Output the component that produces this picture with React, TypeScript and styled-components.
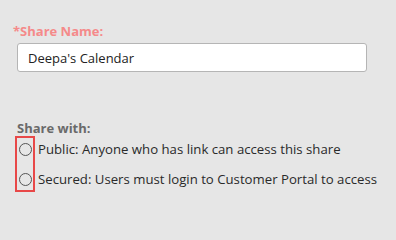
import styled, { createGlobalStyle } from 'styled-components'

const GlobalStyle = createGlobalStyle`
    html, body {
        margin: 0;
        padding: 0;
        background: #e6e6e6;
    }
    body {
        font-family: 'Open Sans', 'Noto Sans', sans-serif;
        color: #333;
    }
`

const options = [
    { id: 'public', label: 'Public: Anyone who has link can access this share' },
    { id: 'secured', label: 'Secured: Users must login to Customer Portal to access' },
]

export default function App() {
    return (
        <StyledShare className="share">
            <GlobalStyle />
            <section className="share__name">
                <span className="share__name--label">*Share Name:</span>
                <input className="share__name--input" type="text" defaultValue="Deepa's Calendar" />
            </section>
            <section className="share__with">
                <span className="share__with--title">Share with:</span>
                <div className="share__with--options">
                    <div className="share__with--radios">
                        {options.map((option) => (
                            <Radio key={option.id} />
                        ))}
                    </div>
                    <div className="share__with--labels">
                        {options.map((option) => (
                            <span key={option.id} className="share__with--label">
                                {option.label}
                            </span>
                        ))}
                    </div>
                </div>
            </section>
        </StyledShare>
    )
}

const Radio = styled.span`
    display: block;
    width: 11px;
    height: 11px;
    border: 1px solid #555;
    border-radius: 50%;
    background: transparent;
`

const StyledShare = styled.main`
    width: 396px;
    height: 240px;
    box-sizing: border-box;
    padding: 23px 0 0 17px;

    .share {
        &__name {
            display: flex;
            flex-direction: column;
            &--label {
                margin-left: -4px;
                font-size: 13px;
                font-weight: 700;
                line-height: 16px;
                color: #f58a8a;
            }
            &--input {
                box-sizing: border-box;
                margin-top: 4px;
                width: 350px;
                height: 29px;
                padding: 0 10px;
                border: 1px solid #b5b5b5;
                border-radius: 3px;
                background: #fff;
                font-family: inherit;
                font-size: 13px;
                color: #222;
                outline: none;
            }
        }

        &__with {
            margin-top: 48px;
            display: flex;
            flex-direction: column;
            &--title {
                font-size: 13px;
                font-weight: 700;
                line-height: 16px;
                color: #6a6a6a;
            }
            &--options {
                display: flex;
                align-items: flex-start;
                margin-top: 0;
                margin-left: -2px;
            }
            &--radios {
                box-sizing: border-box;
                width: 20px;
                height: 56px;
                border: 2px solid #e84848;
                display: flex;
                flex-direction: column;
                align-items: center;
                gap: 17px;
                padding-top: 5px;
            }
            &--labels {
                display: flex;
                flex-direction: column;
                margin-top: -2px;
                padding-left: 3px;
            }
            &--label {
                font-size: 13.2px;
                line-height: 30px;
                color: #2a2a2a;
                white-space: nowrap;
            }
        }
    }
`
